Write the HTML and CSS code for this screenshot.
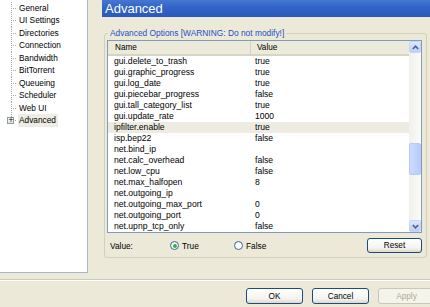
FILE: index.html
```html
<!DOCTYPE html>
<html>
<head>
<meta charset="utf-8">
<link rel="stylesheet" href="styles.css">
</head>
<body>
<div class="window">
  <div class="top">
    <div class="tree">
      <ul class="tree-list">
        <li><span class="gutter"></span><span class="label">General</span></li>
        <li><span class="gutter"></span><span class="label">UI Settings</span></li>
        <li><span class="gutter"></span><span class="label">Directories</span></li>
        <li><span class="gutter"></span><span class="label">Connection</span></li>
        <li><span class="gutter"></span><span class="label">Bandwidth</span></li>
        <li><span class="gutter"></span><span class="label">BitTorrent</span></li>
        <li><span class="gutter"></span><span class="label">Queueing</span></li>
        <li><span class="gutter"></span><span class="label">Scheduler</span></li>
        <li><span class="gutter"></span><span class="label">Web UI</span></li>
        <li class="last"><span class="gutter"><span class="expander">+</span></span><span class="label selected">Advanced</span></li>
      </ul>
    </div>
    <div class="panel">
      <div class="title">Advanced</div>
      <fieldset class="group">
        <legend>Advanced Options [WARNING: Do not modify!]</legend>
        <div class="list">
          <div class="grid">
            <div class="thead"><div class="th">Name</div><div class="th th-value">Value</div></div>
            <div class="row"><span>gui.delete_to_trash</span><span>true</span></div>
            <div class="row"><span>gui.graphic_progress</span><span>true</span></div>
            <div class="row"><span>gui.log_date</span><span>true</span></div>
            <div class="row"><span>gui.piecebar_progress</span><span>false</span></div>
            <div class="row"><span>gui.tall_category_list</span><span>true</span></div>
            <div class="row"><span>gui.update_rate</span><span>1000</span></div>
            <div class="row hl"><span>ipfilter.enable</span><span>true</span></div>
            <div class="row"><span>isp.bep22</span><span>false</span></div>
            <div class="row"><span>net.bind_ip</span><span></span></div>
            <div class="row"><span>net.calc_overhead</span><span>false</span></div>
            <div class="row"><span>net.low_cpu</span><span>false</span></div>
            <div class="row"><span>net.max_halfopen</span><span>8</span></div>
            <div class="row"><span>net.outgoing_ip</span><span></span></div>
            <div class="row"><span>net.outgoing_max_port</span><span>0</span></div>
            <div class="row"><span>net.outgoing_port</span><span>0</span></div>
            <div class="row"><span>net.upnp_tcp_only</span><span>false</span></div>
          </div>
          <div class="scrollbar">
            <div class="sb-btn"><svg width="7" height="5" viewBox="0 0 7 5"><polyline points="0.8,4 3.5,1.2 6.2,4" fill="none" stroke="#4D6185" stroke-width="1.6"/></svg></div>
            <div class="sb-track"><div class="sb-thumb"></div></div>
            <div class="sb-btn"><svg width="7" height="5" viewBox="0 0 7 5"><polyline points="0.8,1 3.5,3.8 6.2,1" fill="none" stroke="#4D6185" stroke-width="1.6"/></svg></div>
          </div>
        </div>
        <div class="valuebar">
          <span class="vlabel">Value:</span>
          <label class="radio radio-true"><span class="dot checked"></span>True</label>
          <label class="radio"><span class="dot"></span>False</label>
          <button class="btn reset">Reset</button>
        </div>
      </fieldset>
    </div>
  </div>
  <div class="sep"></div>
  <div class="footer">
    <button class="btn">OK</button>
    <button class="btn">Cancel</button>
    <button class="btn disabled">Apply</button>
  </div>
</div>
</body>
</html>
```
FILE: styles.css
```css
html, body {
  margin: 0;
  padding: 0;
}
body {
  width: 430px;
  height: 307px;
  overflow: hidden;
  background: #ECE9D8;
  font-family: "Liberation Sans", Arial, sans-serif;
  font-size: 8px;
  color: #000;
}
.window {
  width: 430px;
  height: 307px;
  overflow: hidden;
}
.top {
  display: flex;
  height: 279px;
}
.tree {
  width: 87px;
  height: 272px;
  background: #fff;
  border-right: 1px solid #A7B8CB;
  border-bottom: 1px solid #A7B8CB;
  flex: none;
}
.tree-list {
  list-style: none;
  margin: 0;
  padding: 1.5px 0 0 0;
}
.tree-list li {
  display: flex;
  align-items: center;
  height: 12.5px;
  font-size: 8.3px;
  background-image:
    repeating-linear-gradient(to bottom, #A8A8A8 0 1px, transparent 1px 2px),
    repeating-linear-gradient(to right, #A8A8A8 0 1px, transparent 1px 2px);
  background-size: 1px 100%, 6px 1px;
  background-position: 11px 0, 11px 6px;
  background-repeat: no-repeat;
}
.tree-list li.last {
  background-size: 1px 50%, 6px 1px;
}
.gutter {
  width: 18px;
  flex: none;
  display: flex;
  align-items: center;
}
.expander {
  width: 7px;
  height: 7px;
  margin-left: 7px;
  box-sizing: border-box;
  border: 1px solid #8E9AA6;
  background: linear-gradient(#fff, #E4E2D8);
  font-size: 7px;
  line-height: 5px;
  text-align: center;
  color: #000;
  font-family: "DejaVu Sans", sans-serif;
}
.label {
  padding: 0 1px;
  line-height: 12px;
  white-space: nowrap;
}
.label.selected {
  background: #EEECE3;
  padding: 0 2px 0 1px;
  height: 13px;
  line-height: 13px;
}
.panel {
  flex: 1;
  margin-left: 14px;
  min-width: 0;
}
.title {
  height: 17px;
  line-height: 17px;
  padding-left: 3px;
  color: #fff;
  font-size: 13px;
  background: linear-gradient(to bottom, #4677D0 0%, #3064C5 45%, #2A58BA 100%);
}
.group {
  margin: 11px 3px 0 2px;
  border: 1px solid #D0D0BF;
  border-radius: 3px;
  padding: 2px 4px 4px 2px;
  min-width: 0;
}
.group legend {
  padding: 0 2px;
  margin-left: 1px;
  font-size: 8.4px;
  line-height: 10px;
  color: #1F4FC6;
  white-space: nowrap;
}
.list {
  display: flex;
  height: 193px;
  box-sizing: border-box;
  border: 1px solid #7F9DB9;
  background: #fff;
}
.grid {
  flex: 1;
  min-width: 0;
}
.thead {
  display: grid;
  grid-template-columns: 142px 1fr;
  height: 15px;
  box-sizing: border-box;
  background: #EBEADB;
  border-bottom: 2px solid #D8D4C4;
}
.th {
  padding-left: 7px;
  line-height: 14px;
  font-size: 8.2px;
}
.th-value {
  border-left: 1px solid #D6D2C2;
  padding-left: 6px;
}
.row {
  display: grid;
  grid-template-columns: 142px 1fr;
  height: 11px;
  line-height: 11px;
  font-size: 8.6px;
  white-space: nowrap;
}
.row span:first-child {
  padding-left: 6px;
}
.row span:last-child {
  padding-left: 5px;
}
.row.hl {
  background: #EEECE2;
}
.scrollbar {
  width: 12px;
  flex: none;
  display: flex;
  flex-direction: column;
  background: #F6F5F0;
}
.sb-btn {
  height: 12px;
  box-sizing: border-box;
  border: 1px solid #C6D4F7;
  border-radius: 2px;
  background: linear-gradient(#DDE7FE, #BCCFFA);
  display: flex;
  align-items: center;
  justify-content: center;
}
.sb-track {
  flex: 1;
  background: linear-gradient(to right, #F1F0EA, #FBFBF8);
}
.sb-thumb {
  margin-top: 90px;
  height: 32px;
  box-sizing: border-box;
  border: 1px solid #B7CAF5;
  border-radius: 2px;
  background: linear-gradient(to right, #CCDAFD, #B9CCF8);
}
.valuebar {
  display: flex;
  align-items: center;
  margin-top: 5px;
  height: 15px;
}
.vlabel {
  width: 60px;
  padding-left: 3px;
  flex: none;
  font-size: 8.3px;
}
.radio {
  display: flex;
  align-items: center;
  gap: 3px;
  font-size: 8.3px;
}
.radio-true {
  width: 64px;
}
.dot {
  width: 9px;
  height: 9px;
  box-sizing: border-box;
  border: 1px solid #3E6B9B;
  border-radius: 50%;
  background: radial-gradient(circle at 60% 60%, #fff 40%, #DCDBD2 100%);
  display: flex;
  align-items: center;
  justify-content: center;
}
.dot.checked::after {
  content: "";
  width: 4px;
  height: 4px;
  border-radius: 50%;
  background: #3DAE3D;
}
.btn {
  font-family: "Liberation Sans", Arial, sans-serif;
  font-size: 8.2px;
  color: #000;
  height: 16px;
  width: 57px;
  padding: 0;
  border: 1px solid #1B4C7E;
  border-radius: 3px;
  background: linear-gradient(#FFFFFF 0%, #F4F3EE 70%, #DCD8CC 100%);
}
.reset {
  margin-left: auto;
  width: 55px;
  height: 15px;
}
.btn.disabled {
  color: #ACA899;
  border-color: #C9C7BA;
  background: #F5F4EA;
}
.sep {
  height: 0;
  border-top: 1px solid #CFCBBB;
  border-bottom: 1px solid #FFFFFF;
}
.footer {
  display: flex;
  gap: 9px;
  padding: 7px 0 0 246px;
  width: 430px;
  box-sizing: border-box;
}
.footer .btn {
  flex: none;
}
```
